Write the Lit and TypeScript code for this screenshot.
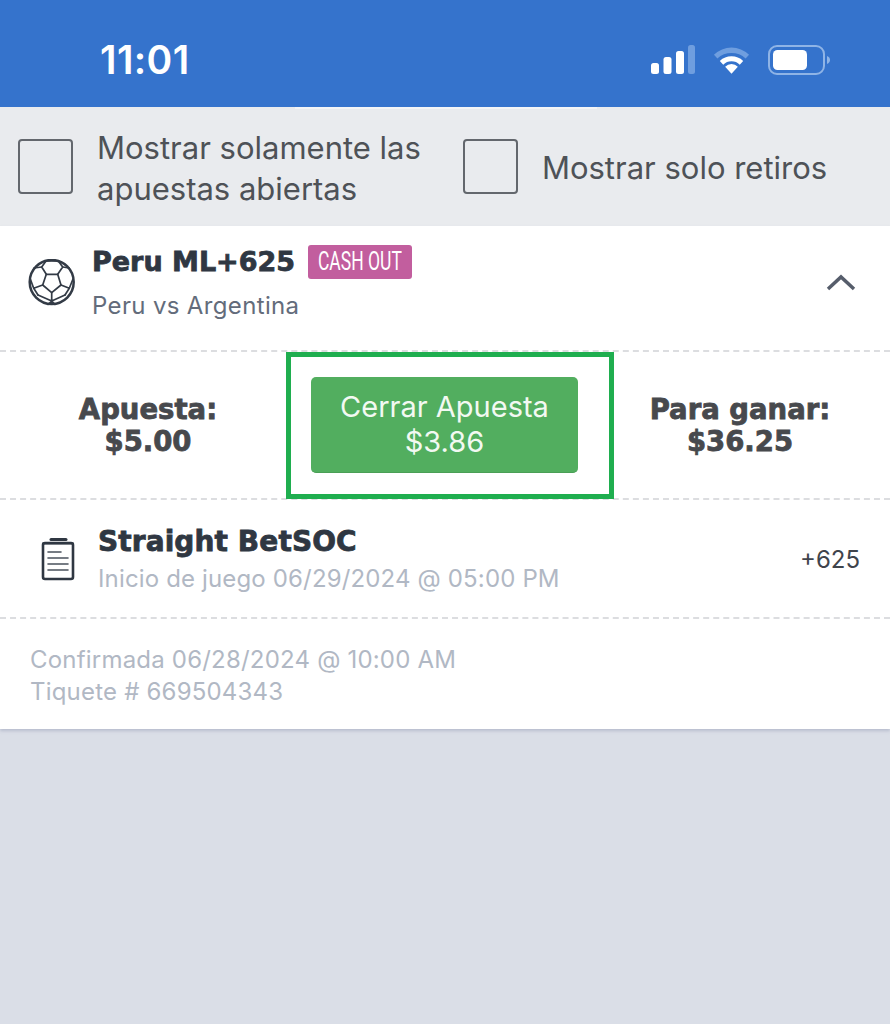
import { LitElement, css, html } from 'lit';
import { customElement } from 'lit/decorators.js';

const BALL = html`<svg class="ball" viewBox="7 8 47 47" fill="none" stroke="#333b46" stroke-width="1.700" stroke-linejoin="round" stroke-linecap="round">
    <circle cx="30.700" cy="31" r="22" stroke-width="2.500" />
    <path d="M25.300 23.300h11.400L40 34l-9.300 7.700L21.700 34z" />
    <path d="M25.300 23.300L20.700 16 25 10h12.300l4.400 6-5 7.300" />
    <path d="M20.700 16l-7.700 1M41.700 16l6.600 1" />
    <path d="M21.700 34l-9 3.300L9.300 28M12.700 37.300l4.300 6.700M40 34l8.300 3.300L52 28M48.300 37.300L44 44" />
    <path d="M30.700 41.700V50L17 44M30.700 50L44 44M30.700 50l-3.700 3.500M30.700 50l3.300 3.500" />
</svg>`;

const CLIPBOARD = html`<svg class="clip" viewBox="0 0 34 44" fill="none" stroke="#2f3742" stroke-linecap="round">
    <rect x="2" y="6" width="30" height="36" rx="2" stroke-width="2.600" />
    <path d="M10 2.500h15" stroke-width="3" />
    <path d="M2 6.500h30" stroke-width="2" />
    <path d="M7 15h13M7 21h20M7 27h20M7 33h20" stroke="#4a515c" stroke-width="1.600" />
</svg>`;

@customElement('app-root')
export class AppRoot extends LitElement {
    static styles = css`
        :host {
            display: block;
            width: 890px;
            height: 1024px;
            overflow: hidden;
            background: #dadee7;
            font-family: 'Inter', 'Noto Sans', sans-serif;
        }

        .status {
            height: 107px;
            box-sizing: border-box;
            background: #3573cc;
            display: flex;
            align-items: center;
            justify-content: space-between;
            padding: 12px 60px 0 100px;
            color: #fff;
        }

        .time {
            font-size: 39px;
            font-weight: 600;
            letter-spacing: 0.4px;
        }

        .status-icons {
            display: flex;
            align-items: center;
            gap: 18px;
        }

        .filters {
            height: 119px;
            box-sizing: border-box;
            background: linear-gradient(#f3f4f6, #f3f4f6) 295px 0 / 302px 2px no-repeat, #e9ebee;
            display: flex;
            align-items: center;
            padding: 0 18px;
            color: #4e5257;
            font-size: 31px;
            line-height: 41px;
        }

        .filter {
            display: flex;
            align-items: center;
            gap: 24px;
        }

        .filter + .filter {
            margin-left: 42px;
        }

        .filter-label {
            padding-top: 2px;
        }

        .check {
            width: 55px;
            height: 55px;
            box-sizing: border-box;
            border: 2px solid #63676d;
            border-radius: 4px;
            flex: none;
        }

        .card {
            background: #fff;
            box-shadow: 0 2px 3px rgba(120, 130, 160, 0.35);
        }

        .row {
            border-bottom: 2px dashed #dcdde0;
            box-sizing: border-box;
        }

        .head {
            height: 126px;
            display: flex;
            align-items: center;
            padding: 0 34px 0 28px;
        }

        .ball {
            width: 47px;
            height: 47px;
            flex: none;
            margin: -12px 17px 0 0;
        }

        .head-main {
            flex: 1;
            margin-top: -12px;
        }

        .title-line {
            display: flex;
            align-items: center;
            gap: 13px;
        }

        .title {
            font-family: 'DejaVu Sans', sans-serif;
            font-size: 27px;
            font-weight: 700;
            color: #2f3742;
            -webkit-text-stroke: 0.8px #2f3742;
        }

        .badge {
            width: 104px;
            height: 34px;
            background: #c25e9e;
            color: #fff;
            border-radius: 3px;
            display: flex;
            align-items: center;
            justify-content: center;
        }

        .badge span {
            font-family: 'Roboto', sans-serif;
            font-size: 25px;
            white-space: nowrap;
            transform: scaleX(0.7);
        }

        .sub {
            font-size: 24px;
            letter-spacing: 0.35px;
            color: #636c7b;
            margin-top: 12px;
        }

        .chevron {
            width: 30px;
            height: 20px;
            flex: none;
            margin-top: -12px;
        }

        .cash {
            height: 148px;
            display: flex;
            align-items: center;
        }

        .amount {
            font-family: 'DejaVu Sans', sans-serif;
            text-align: center;
            font-size: 27.500px;
            line-height: 32px;
            font-weight: 700;
            color: #47494d;
            -webkit-text-stroke: 0.8px #47494d;
        }

        .amount.left {
            width: 286px;
            padding-left: 10px;
            box-sizing: border-box;
        }

        .amount.right {
            flex: 1;
            padding-right: 24px;
        }

        .highlight {
            width: 328px;
            height: 147px;
            box-sizing: border-box;
            border: 5px solid #1fae4f;
            padding: 20px 31px 0 20px;
            flex: none;
        }

        .close-btn {
            width: 267px;
            height: 96px;
            border-radius: 5px;
            background: #52ae5f;
            color: #f2f9f2;
            font-size: 29px;
            line-height: 35px;
            display: flex;
            align-items: center;
            justify-content: center;
            text-align: center;
            border-bottom: 1px solid #4a9f56;
            box-sizing: border-box;
        }

        .leg {
            height: 119px;
            display: flex;
            align-items: center;
            padding: 0 30px 0 41px;
        }

        .clip {
            width: 34px;
            height: 44px;
            flex: none;
            margin-right: 23px;
        }

        .leg-main {
            flex: 1;
        }

        .leg-title {
            font-family: 'DejaVu Sans', sans-serif;
            font-size: 28px;
            letter-spacing: 0.1px;
            font-weight: 700;
            color: #2f3742;
            -webkit-text-stroke: 0.8px #2f3742;
        }

        .leg-sub {
            font-size: 24px;
            letter-spacing: 0.15px;
            color: #b1b8c4;
            margin-top: 6px;
        }

        .odds {
            font-size: 24px;
            color: #3f444c;
            margin-top: 2px;
        }

        .foot {
            height: 110px;
            box-sizing: border-box;
            padding: 25px 30px 0;
            font-size: 24px;
            letter-spacing: 0.2px;
            line-height: 32px;
            color: #b1b8c4;
        }
    `;

    render() {
        return html`
            <div class="status">
                <span class="time">11:01</span>
                <div class="status-icons">
                    <svg width="44" height="30" viewBox="0 0 44 30">
                        <rect x="0" y="18" width="8" height="11" rx="2.500" fill="#fff" />
                        <rect x="12.500" y="12" width="8" height="17" rx="2.500" fill="#fff" />
                        <rect x="25" y="6" width="8" height="23" rx="2.500" fill="#fff" />
                        <rect x="37" y="0" width="7" height="29" rx="2.500" fill="#6f9edf" />
                    </svg>
                    <svg width="37" height="30" viewBox="0 0 38 30">
                        <path d="M1 9.500a26 26 0 0 1 36 0l-3.500 4a21 21 0 0 0-29 0z" fill="#6f9edf" />
                        <path d="M7 16a17.500 17.500 0 0 1 24 0l-3.500 3.800a12 12 0 0 0-17 0z" fill="#fff" />
                        <path d="M12.500 22a9 9 0 0 1 13 0L19 29z" fill="#fff" />
                    </svg>
                    <svg width="62" height="30" viewBox="0 0 62 30">
                        <rect x="1" y="1" width="55" height="28" rx="8" fill="none" stroke="#8fb4e6" stroke-width="2" />
                        <rect x="5" y="5" width="34" height="20" rx="4.500" fill="#fff" />
                        <path d="M59 11c2 .8 3 2.200 3 4s-1 3.200-3 4z" fill="#8fb4e6" />
                    </svg>
                </div>
            </div>
            <div class="filters">
                <div class="filter">
                    <span class="check"></span>
                    <span class="filter-label">Mostrar solamente las<br />apuestas abiertas</span>
                </div>
                <div class="filter">
                    <span class="check"></span>
                    <span class="filter-label">Mostrar solo retiros</span>
                </div>
            </div>
            <div class="card">
                <div class="row head">
                    ${BALL}
                    <div class="head-main">
                        <div class="title-line">
                            <span class="title">Peru ML+625</span>
                            <span class="badge"><span>CASH OUT</span></span>
                        </div>
                        <div class="sub">Peru vs Argentina</div>
                    </div>
                    <svg class="chevron" viewBox="0 0 30 20" fill="none" stroke="#565d6b" stroke-width="3.500">
                        <path d="M2 17L15 5l13 12" />
                    </svg>
                </div>
                <div class="row cash">
                    <div class="amount left">Apuesta:<br />$5.00</div>
                    <div class="highlight">
                        <div class="close-btn"><span>Cerrar Apuesta<br />$3.86</span></div>
                    </div>
                    <div class="amount right">Para ganar:<br />$36.25</div>
                </div>
                <div class="row leg">
                    ${CLIPBOARD}
                    <div class="leg-main">
                        <div class="leg-title">Straight BetSOC</div>
                        <div class="leg-sub">Inicio de juego 06/29/2024 @ 05:00 PM</div>
                    </div>
                    <span class="odds">+625</span>
                </div>
                <div class="foot">Confirmada 06/28/2024 @ 10:00 AM<br />Tiquete # 669504343</div>
            </div>
        `;
    }
}
